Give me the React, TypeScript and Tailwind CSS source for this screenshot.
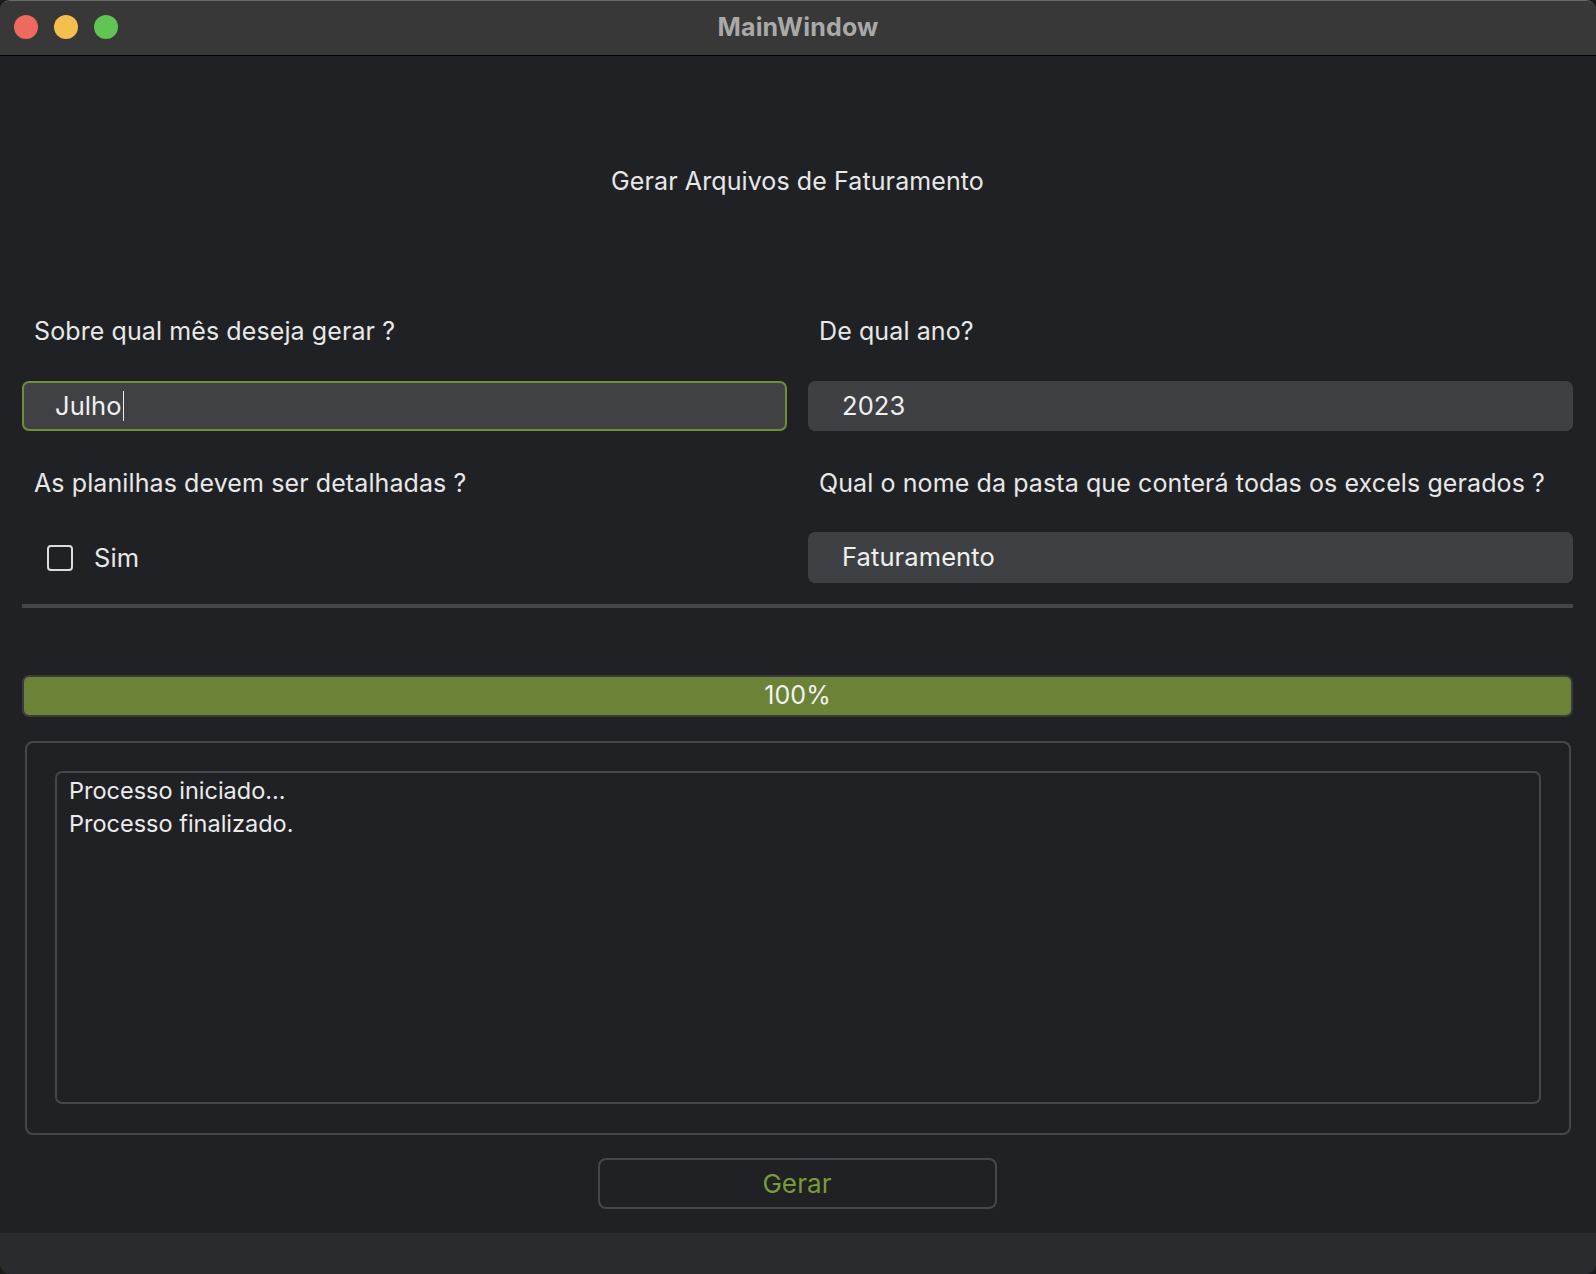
export default function App() {
  return (
    <div className="w-[1596px] h-[1274px] bg-[#1b1b1b]" style={{ fontFamily: "Inter, 'Noto Sans', sans-serif" }}>
      <div className="flex flex-col w-full h-full rounded-[10px] overflow-hidden bg-[#202124] border-t border-[#6a6a6a]">
        {/* Title bar */}
        <div className="relative flex items-center justify-center h-[55px] shrink-0 bg-[#383838] border-b border-black">
          <div className="absolute left-[14px] top-[14px] flex gap-[16px]">
            <span className="w-[24px] h-[24px] rounded-full bg-[#ee6a5f]" />
            <span className="w-[24px] h-[24px] rounded-full bg-[#f5bf4f]" />
            <span className="w-[24px] h-[24px] rounded-full bg-[#61c554]" />
          </div>
          <span className="text-[25px] font-bold text-[#a9a9a9] tracking-[0.2px]">MainWindow</span>
        </div>

        {/* Content */}
        <div className="flex flex-col px-[22px] pr-[23px] text-[#e8e8e8] text-[25px] tracking-[0.1px]">
          <div className="mt-[107px] h-[36px] leading-[36px] text-center">Gerar Arquivos de Faturamento</div>

          <div className="grid grid-cols-2 gap-x-[21px] mt-[114px]">
            <div className="h-[36px] leading-[36px] pl-[12px]">Sobre qual mês deseja gerar ?</div>
            <div className="h-[36px] leading-[36px] pl-[11px]">De qual ano?</div>
          </div>

          <div className="grid grid-cols-2 gap-x-[21px] mt-[32px]">
            <div className="h-[50px] flex items-center rounded-[7px] border-2 border-[#6f8f33] bg-[#404144] pl-[31px] text-[25.5px] text-[#f0f0f0]">
              Julho<span className="inline-block w-[1.5px] h-[30px] bg-[#eeeeee] ml-[1px]" />
            </div>
            <div className="h-[50px] flex items-center rounded-[7px] bg-[#3f4043] pl-[34px] text-[25.5px] text-[#f0f0f0]">2023</div>
          </div>

          <div className="grid grid-cols-2 gap-x-[21px] mt-[34px]">
            <div className="h-[36px] leading-[36px] pl-[12px]">As planilhas devem ser detalhadas ?</div>
            <div className="h-[36px] leading-[36px] pl-[11px]">Qual o nome da pasta que conterá todas os excels gerados ?</div>
          </div>

          <div className="grid grid-cols-2 gap-x-[21px] mt-[31px]">
            <div className="h-[51px] flex items-center pl-[25px]">
              <span className="w-[26px] h-[26px] rounded-[4px] border-2 border-[#dcdcdc]" />
              <span className="ml-[21px] text-[25.5px] leading-none">Sim</span>
            </div>
            <div className="h-[51px] flex items-center rounded-[7px] bg-[#3f4043] pl-[34px] text-[25.5px] text-[#f0f0f0]">Faturamento</div>
          </div>

          <div className="mt-[21px] h-[4px] bg-[#45464a]" />

          <div className="mt-[67px] h-[42px] rounded-[7px] border-2 border-[#3a3b3f] bg-[#6b8237] flex items-center justify-center text-[25px] text-[#f2f2f2]">
            100%
          </div>

          <div className="mt-[24px] ml-[3px] mr-[2px] h-[394px] rounded-[8px] border-2 border-[#46474a] pt-[28px] px-[28px] pb-[29px]">
            <div className="h-full rounded-[7px] border-2 border-[#46474a] pl-[12px] pt-[1px] text-[23.5px] tracking-normal leading-[33px] text-[#ececec]">
              <div>Processo iniciado...</div>
              <div>Processo finalizado.</div>
            </div>
          </div>

          <div className="mt-[23px] flex justify-center">
            <button className="ml-[-1px] w-[399px] h-[51px] rounded-[8px] border-2 border-[#46474b] text-[26px] text-[#789b3b]">Gerar</button>
          </div>
        </div>

        {/* Status bar */}
        <div className="mt-auto h-[41px] bg-[#2a2b2f]" />
      </div>
    </div>
  );
}
